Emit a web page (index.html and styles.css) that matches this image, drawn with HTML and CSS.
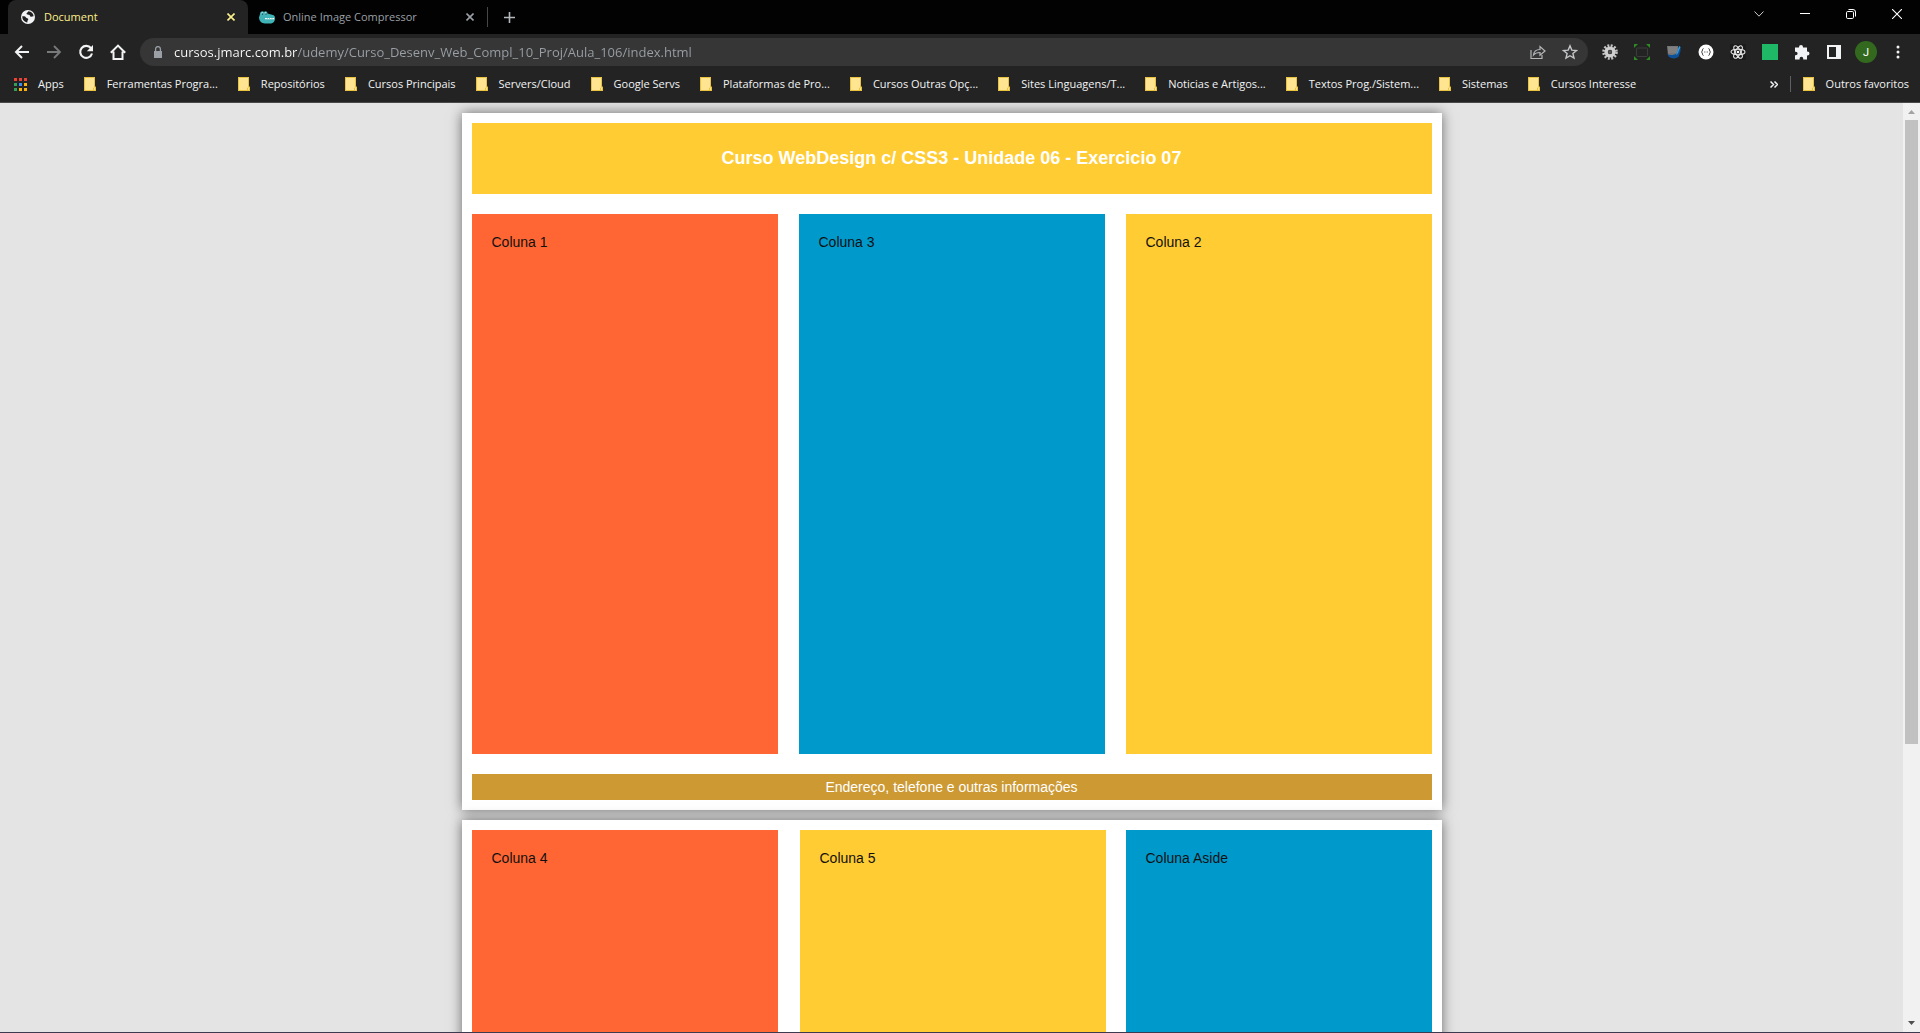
FILE: index.html
```html
<!DOCTYPE html>
<html lang="pt-BR">
<head>
<meta charset="utf-8">
<title>Document</title>
<link rel="stylesheet" href="styles.css">
</head>
<body>
<svg class="defs" aria-hidden="true">
  <symbol id="folder" viewBox="0 0 12 14"><path d="M0 0h11v9.500h1V14H0z" fill="#e9c23f"/><path d="M1 1h9v9.500L9 11v2H1z" fill="#ffe591"/><path d="M10 10.500h1V13h-1z" fill="#ffe591"/></symbol>
  <symbol id="cross" viewBox="0 0 8 8"><path d="M.5.5l7 7M7.500.5l-7 7" stroke="currentColor" stroke-width="1.600" fill="none"/></symbol>
</svg>
<div class="browser">
  <header class="chrome">
    <div class="tabstrip">
      <div class="tab tab-active">
        <svg class="favicon" viewBox="0 0 14 14"><circle cx="7" cy="7" r="7" fill="#f1f3f4"/><path d="M1.300 6.200c2.200-.2 3.200.3 3.700 1.300.4.900 2 .5 2.200 1.600.2 1-.9 1.200-.9 3.300-2.700-.3-5.200-2.500-5-6.200zM7.300 1.300c-.2 1.300-1.700 1.100-1.800 2.400 0 1.200 2 .6 3 1.400.7.6.4 1.500 1.400 1.700 1 .2 1.600-.6 2.700-.5C12.400 3.500 10.300 1.400 7.300 1.300z" fill="#202020"/></svg>
        <span class="tab-title">Document</span>
        <button class="tab-close" aria-label="Fechar"><svg><use href="#cross"/></svg></button>
      </div>
      <div class="tab">
        <svg class="favicon croc" viewBox="0 0 16 13"><path d="M1 3.500C1 .5 4 0 5 1.500 6 0 8.500.5 8.500 3L14 4.500c1.600.5 2 1.500 2 3.500 0 3-2 5-5 5H6C2.500 13 0 10 0 7z" fill="#3fb3b5"/><path d="M6 7.500h1.500l.7 1 .7-1h1l.7 1 .7-1h1l.7 1 .7-1H15v1.300H6z" fill="#fff"/><path d="M2.500 2.500h1.500M5.800 2.500h1.500" stroke="#fff"/><path d="M3 3.500h1M6.500 3.500h1" stroke="#111"/></svg>
        <span class="tab-title">Online Image Compressor</span>
        <button class="tab-close" aria-label="Fechar"><svg><use href="#cross"/></svg></button>
      </div>
      <button class="new-tab" aria-label="Nova guia"><svg width="11" height="11" viewBox="0 0 11 11"><path d="M5.500 0v11M0 5.500h11" stroke="#b5b8bb" stroke-width="1.600"/></svg></button>
      <div class="window-buttons">
        <button aria-label="Pesquisar guias"><svg width="10" height="6" viewBox="0 0 10 6"><path d="M.5.500L5 5.200 9.500.5" fill="none" stroke="#ccc"/></svg></button>
        <button aria-label="Minimizar"><svg width="10" height="2" viewBox="0 0 10 2"><path d="M0 .5h10" stroke="#fff"/></svg></button>
        <button aria-label="Restaurar"><svg width="10" height="10" viewBox="0 0 10 10"><rect x=".5" y="2.500" width="7" height="7" rx="1.200" fill="none" stroke="#fff"/><path d="M2.500.5H7A2.500 2.500 0 0 1 9.500 3v4.500" fill="none" stroke="#fff"/></svg></button>
        <button aria-label="Fechar janela"><svg width="10" height="10" viewBox="0 0 10 10"><path d="M0 0l10 10M10 0L0 10" stroke="#fff" stroke-width="1.100"/></svg></button>
      </div>
    </div>

    <div class="toolbar">
      <button class="tool" aria-label="Voltar"><svg viewBox="0 0 16 16"><path d="M15 8H2.500M8 2L2 8l6 6" fill="none" stroke="#f1f3f4" stroke-width="2"/></svg></button>
      <button class="tool" aria-label="Avançar"><svg viewBox="0 0 16 16"><path d="M1 8h12.500M8 2l6 6-6 6" fill="none" stroke="#77797b" stroke-width="1.800"/></svg></button>
      <button class="tool" aria-label="Recarregar"><svg viewBox="0 0 16 16"><path d="M13 4.200A6 6 0 1 0 14 9.500" fill="none" stroke="#f1f3f4" stroke-width="2.100"/><path d="M15 1v6.200H8.800z" fill="#f1f3f4"/></svg></button>
      <button class="tool" aria-label="Página inicial"><svg viewBox="0 0 16 16"><path d="M3.500 7.500V15h9V7.500M.8 8.800L8 1.600l7.200 7.200" fill="none" stroke="#f1f3f4" stroke-width="2"/></svg></button>
      <div class="omnibox">
        <svg class="lock" width="10" height="12" viewBox="0 0 10 12"><path d="M1 5h8v7H1z" fill="#9aa0a6"/><path d="M2.600 5V3a2.400 2.400 0 0 1 4.800 0v2" fill="none" stroke="#9aa0a6" stroke-width="1.300"/></svg>
        <input class="address" type="text" aria-label="Endereço" value="cursos.jmarc.com.br/udemy/Curso_Desenv_Web_Compl_10_Proj/Aula_106/index.html">
        <button class="tool" aria-label="Compartilhar"><svg viewBox="0 0 16 16"><path d="M1 6v8.500h11V11M3.500 11c.4-4 3-5.500 6.500-5.500V2.500L15 7l-5 4.200V8.500c-3 0-5 .6-6.500 2.500z" fill="none" stroke="#b4b6b8" stroke-width="1.200"/></svg></button>
        <button class="tool" aria-label="Adicionar aos favoritos"><svg viewBox="0 0 16 16"><path d="M8 1.800l1.800 4.300 4.700.4-3.600 3 1.100 4.600L8 11.700l-4 2.400 1.100-4.600-3.600-3 4.700-.4z" fill="none" stroke="#c4c6c8" stroke-width="1.400"/></svg></button>
      </div>
      <button class="tool" aria-label="Extensão de configurações"><svg viewBox="0 0 16 16"><circle cx="8" cy="8" r="6.500" fill="none" stroke="#c4c4c4" stroke-width="2.600" stroke-dasharray="1.900 1.500"/><circle cx="8" cy="8" r="3.900" fill="none" stroke="#cfcfcf" stroke-width="3.400"/><circle cx="8" cy="8" r="1.800" fill="#555"/></svg></button>
      <button class="tool" aria-label="Captura de tela"><svg viewBox="0 0 16 16"><path d="M0 0h4L0 4zM12 0h4v4zM0 12v4h4zM16 12v4h-4z" fill="#2f8a25"/><rect x="2.500" y="4" width="11" height="8.500" rx="1" fill="none" stroke="#3c3c3c"/></svg></button>
      <button class="tool" aria-label="Leitor"><svg viewBox="0 0 16 16"><path d="M1 2h11v9H2z" fill="#777"/><path d="M2 4h9M2 6h9M2 8h9" stroke="#999" stroke-width=".6"/><path d="M1.500 10c3 2 6 1 9-.5l3-7 1 .5v4l-2 6c-3 2-7 2-10-.5z" fill="#0d5299"/><path d="M13 2l1.500 1-3 7-1.500 1z" fill="#349be0"/></svg></button>
      <button class="tool" aria-label="Formatador JSON"><svg viewBox="0 0 16 16"><circle cx="8" cy="8" r="7.500" fill="#fff"/><path d="M5.500 4.500C4 4.500 5 7 3.500 8 5 9 4 11.500 5.500 11.500M10.500 4.500C12 4.500 11 7 12.500 8 11 9 12 11.500 10.500 11.500" fill="none" stroke="#444"/><path d="M6 8h4" stroke="#777" stroke-dasharray="1 .5"/></svg></button>
      <button class="tool" aria-label="React"><svg viewBox="0 0 16 16"><path d="M0 0h16v16H0z" fill="#1b1b1b"/><g fill="none" stroke="#e8e8e8" stroke-width="1.100"><ellipse cx="8" cy="8" rx="7" ry="2.700"/><ellipse cx="8" cy="8" rx="7" ry="2.700" transform="rotate(60 8 8)"/><ellipse cx="8" cy="8" rx="7" ry="2.700" transform="rotate(120 8 8)"/></g><circle cx="8" cy="8" r="1.300" fill="#fff"/></svg></button>
      <button class="tool" aria-label="Extensão verde"><svg viewBox="0 0 16 16"><path d="M0 0h16v16H0z" fill="#1eb866"/></svg></button>
      <button class="tool" aria-label="Extensões"><svg viewBox="0 0 16 16"><path d="M1 3.500h4V3a2 2 0 0 1 4 0v.5h4v4h.5a2 2 0 0 1 0 4H13v4H9.200V14.500a1.800 1.800 0 0 0-3.600 0v1H1v-4.200h.8a1.800 1.800 0 0 0 0-3.600H1z" fill="#f1f3f4"/></svg></button>
      <button class="tool" aria-label="Painel lateral"><svg viewBox="0 0 16 16"><path d="M1 1h14v14H1zM3 3v10h7V3z" fill="#f1f3f4" fill-rule="evenodd"/></svg></button>
      <button class="tool avatar" aria-label="Perfil">J</button>
      <button class="tool" aria-label="Menu"><svg viewBox="0 0 16 16"><g fill="#f1f3f4"><circle cx="8" cy="3" r="1.500"/><circle cx="8" cy="8" r="1.500"/><circle cx="8" cy="13" r="1.500"/></g></svg></button>
    </div>

    <nav class="bookmarks">
      <a class="bookmark" href="#"><svg class="apps" viewBox="0 0 13 13"><path d="M0 0h3v3H0zM5 0h3v3H5zM10 0h3v3h-3z" fill="#ea4335"/><path d="M0 5h3v3H0zM0 10h3v3H0z" fill="#34a057"/><path d="M5 5h3v3H5z" fill="#3b8cf0"/><path d="M10 5h3v3h-3zM5 10h3v3H5zM10 10h3v3h-3z" fill="#fbb30c"/></svg>Apps</a>
      <a class="bookmark" href="#"><svg class="folder"><use href="#folder"/></svg>Ferramentas Progra...</a>
      <a class="bookmark" href="#"><svg class="folder"><use href="#folder"/></svg>Repositórios</a>
      <a class="bookmark" href="#"><svg class="folder"><use href="#folder"/></svg>Cursos Principais</a>
      <a class="bookmark" href="#"><svg class="folder"><use href="#folder"/></svg>Servers/Cloud</a>
      <a class="bookmark" href="#"><svg class="folder"><use href="#folder"/></svg>Google Servs</a>
      <a class="bookmark" href="#"><svg class="folder"><use href="#folder"/></svg>Plataformas de Pro...</a>
      <a class="bookmark" href="#"><svg class="folder"><use href="#folder"/></svg>Cursos Outras Opç...</a>
      <a class="bookmark" href="#"><svg class="folder"><use href="#folder"/></svg>Sites Linguagens/T...</a>
      <a class="bookmark" href="#"><svg class="folder"><use href="#folder"/></svg>Noticias e Artigos...</a>
      <a class="bookmark" href="#"><svg class="folder"><use href="#folder"/></svg>Textos Prog./Sistem...</a>
      <a class="bookmark" href="#"><svg class="folder"><use href="#folder"/></svg>Sistemas</a>
      <a class="bookmark" href="#"><svg class="folder"><use href="#folder"/></svg>Cursos Interesse</a>
      <button class="more" aria-label="Mais favoritos"><svg width="8" height="7" viewBox="0 0 8 7"><path d="M.5.500l3 3-3 3M4.500.5l3 3-3 3" fill="none" stroke="#f1f3f4" stroke-width="1.500"/></svg></button>
      <a class="bookmark other" href="#"><svg class="folder"><use href="#folder"/></svg>Outros favoritos</a>
    </nav>
  </header>

  <div class="viewport">
    <div class="page">
      <section class="card">
        <h1 class="banner">Curso WebDesign c/ CSS3 - Unidade 06 - Exercicio 07</h1>
        <div class="columns">
          <article class="column orange">Coluna 1</article>
          <article class="column blue">Coluna 3</article>
          <article class="column yellow">Coluna 2</article>
        </div>
        <footer class="contact">Endereço, telefone e outras informações</footer>
      </section>
      <section class="card">
        <div class="columns with-aside">
          <div class="main">
            <article class="column orange">Coluna 4</article>
            <article class="column yellow">Coluna 5</article>
          </div>
          <aside class="column blue">Coluna Aside</aside>
        </div>
      </section>
    </div>
    <div class="scrollbar" aria-hidden="true">
      <svg class="arrow" viewBox="0 0 7 4"><path d="M0 4l3.500-4L7 4z" fill="#a3a3a3"/></svg>
      <div class="track"><div class="thumb"></div></div>
      <svg class="arrow" viewBox="0 0 7 4"><path d="M0 0l3.500 4L7 0z" fill="#505050"/></svg>
    </div>
  </div>
</div>
</body>
</html>
```

FILE: styles.css
```css
* { box-sizing: border-box; }

body {
  margin: 0;
  background: #e4e4e4;
  font-family: "Liberation Sans", Arial, sans-serif;
  font-size: 14px;
}

button {
  display: flex;
  align-items: center;
  justify-content: center;
  padding: 0;
  border: 0;
  background: none;
}

svg { display: block; flex: none; }
.defs { display: none; }

.browser {
  display: flex;
  flex-direction: column;
  height: 100vh;
  border-bottom: 1px solid #3c3a4e;
}

/* Browser chrome */
.chrome {
  flex: none;
  border-bottom: 1px solid #4a4a4a;
  background: #232323;
  color: #f1f3f4;
  font-family: "Open Sans", "Noto Sans", sans-serif;
  font-size: 11px;
}

.tabstrip {
  display: flex;
  height: 34px;
  padding-left: 8px;
  background: #020202;
}

.tab {
  display: flex;
  align-items: center;
  width: 240px;
  padding: 0 9px 0 12px;
  color: #9aa0a6;
}

.tab-active {
  margin-right: -1px;
  border-radius: 8px 8px 0 0;
  background: #232323;
  color: #fdf08c;
}

.favicon { width: 16px; height: 14px; margin-right: 8px; }
.tab-title { flex: 1; line-height: 16px; }
.tab-close { width: 16px; height: 16px; color: inherit; }
.tab-close svg { width: 8px; height: 8px; }

.new-tab {
  align-self: center;
  width: 44px;
  height: 20px;
  border-left: 1px solid #45474a;
}

.window-buttons { display: flex; margin-left: auto; }
.window-buttons button { width: 46px; height: 28px; }

.toolbar {
  display: flex;
  align-items: center;
  height: 36px;
  padding: 0 6px;
}

.tool { flex: none; width: 32px; height: 28px; }
.tool svg { width: 16px; height: 16px; }

.omnibox {
  display: flex;
  flex: 1;
  align-items: center;
  height: 28px;
  margin: 0 6px;
  padding: 0 2px 0 13px;
  border-radius: 14px;
  background: #363636;
}

.address {
  flex: 1;
  height: 28px;
  margin-left: 11px;
  padding: 0;
  border: 0;
  outline: 0;
  background: linear-gradient(90deg, #ffffff 123px, #9aa0a6 123px);
  background-clip: text;
  -webkit-text-fill-color: transparent;
  color: #ffffff;
  font: 13px "Open Sans", "Noto Sans", sans-serif;
}

.avatar {
  width: 22px;
  height: 22px;
  margin: 0 5px;
  border-radius: 50%;
  background: #33691e;
  color: #ffffff;
  font: 11px Roboto, sans-serif;
}

.bookmarks {
  display: flex;
  align-items: center;
  gap: 20px;
  height: 32px;
  padding: 0 11px 4px 14px;
}

.bookmark {
  display: flex;
  align-items: center;
  gap: 11px;
  color: inherit;
  line-height: 16px;
  text-decoration: none;
  white-space: nowrap;
}

.folder { width: 12px; height: 14px; }
.apps { width: 13px; height: 13px; }
.more { width: 8px; height: 16px; margin-left: auto; margin-right: -8px; }
.other { padding-left: 12px; border-left: 1px solid #5f6062; }

/* Page shown in the viewport */
.viewport {
  display: flex;
  flex: 1;
  min-height: 0;
}

.page {
  flex: 1;
  overflow: hidden;
  background: #e4e4e4;
}

.card {
  max-width: 980px;
  margin: 10px auto;
  padding: 10px;
  background: #ffffff;
  box-shadow: 0 0 12px #6a6a6a;
}

.banner {
  margin: 0 0 20px;
  padding: 25px;
  background: #ffcc33;
  color: #ffffff;
  font-size: 18px;
  line-height: 21px;
  text-align: center;
}

.columns,
.main {
  display: grid;
  grid-template-columns: repeat(3, 1fr);
  gap: 21px;
}

.with-aside { grid-template-columns: 1fr 306px; gap: 20px; }
.main { grid-template-columns: 1fr 1fr; gap: 22px; }

.column {
  min-height: 540px;
  padding: 20px;
  color: #111111;
  line-height: 16px;
}

.orange { background: #ff6633; }
.blue { background: #0099cc; }
.yellow { background: #ffcc33; }

.contact {
  margin-top: 20px;
  padding: 5px;
  background: #cc9933;
  color: #ffffff;
  line-height: 16px;
  text-align: center;
}

.scrollbar {
  display: flex;
  flex-direction: column;
  align-items: center;
  width: 17px;
  padding: 7px 2px;
  background: #f1f1f1;
}

.arrow { width: 7px; height: 4px; }
.track { flex: 1; width: 13px; margin: 6px 0; }
.thumb { height: calc(70% - 3px); background: #c1c1c1; }
```
